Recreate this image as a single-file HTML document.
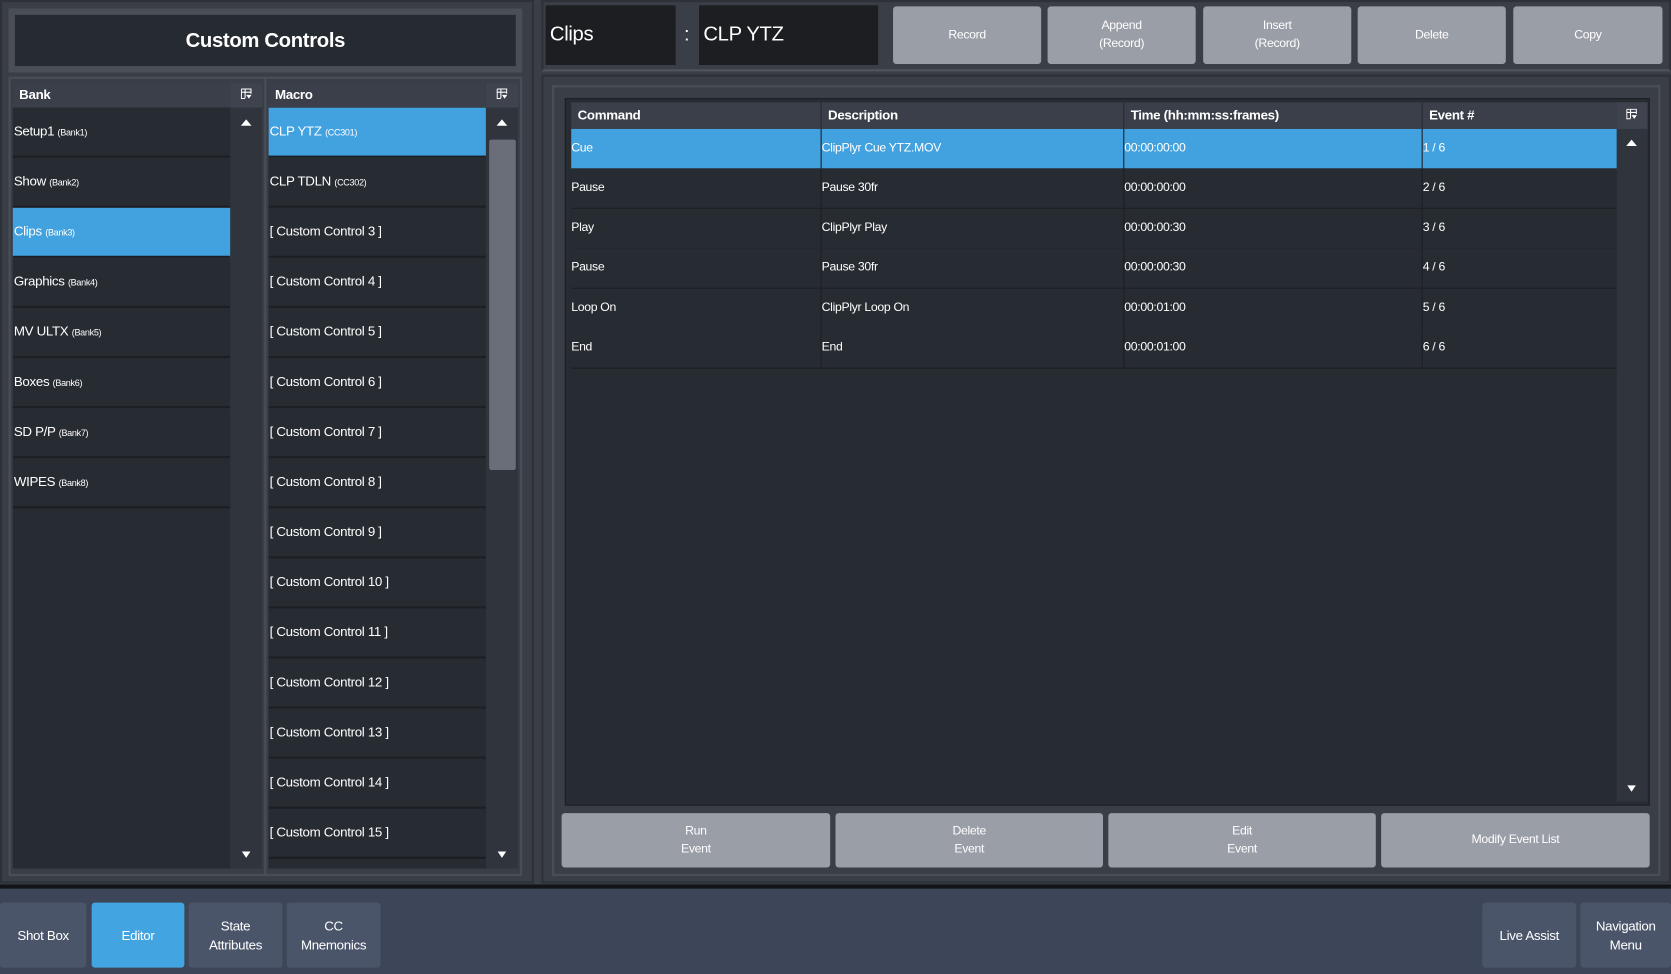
<!DOCTYPE html>
<html><head><meta charset="utf-8"><style>
html,body{margin:0;padding:0;background:#3a3e46;overflow:hidden;width:1671px;height:974px}
#w{position:absolute;left:0;top:0;width:1568px;height:914px;transform:scale(1.06569,1.06565);transform-origin:0 0;background:#3a3e46;font-family:"Liberation Sans",sans-serif;color:#fff;letter-spacing:-0.3px}
.a{position:absolute;box-sizing:border-box}
.fr{border:2px solid #4a4e56}
.row{position:absolute;left:0;right:0;height:47px;background:#272b32;border-bottom:2px solid #1c1f24;box-sizing:border-box;font-size:12.5px;line-height:45px;padding-left:1px;white-space:nowrap}
.row small{font-size:8.5px}
.sel{background:#42a1df}
.hdr{background:#3a3f4a;font-weight:bold;font-size:12.5px;line-height:23px;padding-left:6px}
.sc{background:#30343c}
.ic{position:absolute;width:10px;height:10px}
.up{width:0;height:0;border-left:5px solid transparent;border-right:5px solid transparent;border-bottom:6px solid #fff;position:absolute}
.dn{width:0;height:0;border-left:4px solid transparent;border-right:4px solid transparent;border-top:6px solid #fff;position:absolute}
.btn{position:absolute;background:#9a9ea7;border-radius:3px;color:#fff;font-size:11.5px;text-align:center;display:flex;align-items:center;justify-content:center;line-height:17px}
.tr{position:absolute;left:536px;width:981px;height:38px;border-bottom:1px solid #1c1f24;box-sizing:border-box;font-size:11.5px;line-height:37px;background:#272b32}
.tr span{position:absolute;top:0;height:37px;border-right:1px solid #1c1f24;box-sizing:border-box}
.bb{position:absolute;top:847px;height:61px;background:#4b556a;border-radius:3px;font-size:12.5px;text-align:center;display:flex;align-items:center;justify-content:center;line-height:18px}
</style></head><body><div id="w">
<svg width="0" height="0" style="position:absolute"><defs><g id="tic"><path d="M0.5 0.5H9.5V5M0.5 0.5V9.5H4M0.5 3.5H9.5M4 0.5V9" stroke="#fff" fill="none" stroke-width="1"/><path d="M5 6H10L7.5 9.5Z" fill="#fff"/></g></defs></svg>
<div class="a" style="left:0;top:0;width:501px;height:829px;border:2px solid #2e3138;background:#3a3e46"></div>
<div class="a fr" style="left:8px;top:8px;width:482px;height:60px;background:#4a4e56;padding:4px"><div style="background:#262a31;height:100%;text-align:center;font-weight:bold;font-size:19px;line-height:50px">Custom Controls</div></div>
<div class="a fr" style="left:8px;top:72px;width:482px;height:750px;background:#3a3e46"></div>
<div class="a" style="left:12px;top:78px;width:204px;height:737px;background:#272b32"></div>
<div class="a hdr" style="left:12px;top:78px;width:204px;height:23px">Bank</div>
<div class="a sc" style="left:216px;top:78px;width:30px;height:737px"></div>
<div class="a" style="left:216px;top:78px;width:30px;height:23px;background:#3e434e"></div>
<svg class="ic" style="left:226px;top:83px" viewBox="0 0 10 10"><use href="#tic"/></svg>
<div class="up" style="left:226px;top:112px"></div><div class="dn" style="left:227px;top:799px"></div>
<div class="a" style="left:12px;top:101px;width:204px;height:400px">
<div class="row" style="top:0">Setup1 <small>(Bank1)</small></div>
<div class="row" style="top:47px">Show <small>(Bank2)</small></div>
<div class="row sel" style="top:94px">Clips <small>(Bank3)</small></div>
<div class="row" style="top:141px">Graphics <small>(Bank4)</small></div>
<div class="row" style="top:188px">MV ULTX <small>(Bank5)</small></div>
<div class="row" style="top:235px">Boxes <small>(Bank6)</small></div>
<div class="row" style="top:282px">SD P/P <small>(Bank7)</small></div>
<div class="row" style="top:329px">WIPES <small>(Bank8)</small></div>
</div>
<div class="a" style="left:248px;top:72px;width:2px;height:750px;background:#4a4e56"></div>
<div class="a" style="left:252px;top:78px;width:204px;height:737px;background:#272b32;overflow:hidden">
<div class="row sel" style="top:23px">CLP YTZ <small>(CC301)</small></div>
<div class="row" style="top:70px">CLP TDLN <small>(CC302)</small></div>
<div class="row" style="top:117px">[ Custom Control 3 ]</div>
<div class="row" style="top:164px">[ Custom Control 4 ]</div>
<div class="row" style="top:211px">[ Custom Control 5 ]</div>
<div class="row" style="top:258px">[ Custom Control 6 ]</div>
<div class="row" style="top:305px">[ Custom Control 7 ]</div>
<div class="row" style="top:352px">[ Custom Control 8 ]</div>
<div class="row" style="top:399px">[ Custom Control 9 ]</div>
<div class="row" style="top:446px">[ Custom Control 10 ]</div>
<div class="row" style="top:493px">[ Custom Control 11 ]</div>
<div class="row" style="top:540px">[ Custom Control 12 ]</div>
<div class="row" style="top:587px">[ Custom Control 13 ]</div>
<div class="row" style="top:634px">[ Custom Control 14 ]</div>
<div class="row" style="top:681px">[ Custom Control 15 ]</div>
</div>
<div class="a hdr" style="left:252px;top:78px;width:204px;height:23px">Macro</div>
<div class="a sc" style="left:456px;top:78px;width:30px;height:737px"></div>
<div class="a" style="left:456px;top:78px;width:30px;height:23px;background:#3e434e"></div>
<svg class="ic" style="left:466px;top:83px" viewBox="0 0 10 10"><use href="#tic"/></svg>
<div class="up" style="left:466px;top:112px"></div><div class="dn" style="left:467px;top:799px"></div>
<div class="a" style="left:459px;top:131px;width:25px;height:310px;background:#6a6e78;border-radius:2px"></div>
<div class="a" style="left:508px;top:0;width:1060px;height:67px;border:2px solid #2e3138;border-bottom:2px solid #50545c"></div>
<div class="a" style="left:512px;top:5px;width:122px;height:56px;background:#1c1e22;font-size:19px;line-height:56px;padding-left:4px">Clips</div>
<div class="a" style="left:642px;top:22px;font-size:18px">:</div>
<div class="a" style="left:656px;top:5px;width:168px;height:56px;background:#1c1e22;font-size:19px;line-height:56px;padding-left:4px">CLP YTZ</div>
<div class="btn" style="left:838px;top:6px;width:139px;height:54px">Record</div>
<div class="btn" style="left:983px;top:6px;width:139px;height:54px">Append<br>(Record)</div>
<div class="btn" style="left:1129px;top:6px;width:139px;height:54px">Insert<br>(Record)</div>
<div class="btn" style="left:1274px;top:6px;width:139px;height:54px">Delete</div>
<div class="btn" style="left:1420px;top:6px;width:140px;height:54px">Copy</div>
<div class="a" style="left:508px;top:70px;width:1060px;height:759px;border:2px solid #2e3138;background:#3a3e46"></div>
<div class="a fr" style="left:518px;top:80px;width:1040px;height:742px"></div>
<div class="a" style="left:530px;top:92px;width:1018px;height:664px;background:#272b32;border:1px solid #1c1f24"></div>
<div class="a" style="left:536px;top:96px;width:981px;height:25px;background:#3a3f4a;font-size:12.5px;font-weight:bold;line-height:25px">
<span style="position:absolute;left:6px">Command</span><span style="position:absolute;left:241px">Description</span><span style="position:absolute;left:525px">Time (hh:mm:ss:frames)</span><span style="position:absolute;left:805px">Event #</span>
<i style="position:absolute;left:234px;top:0;width:1px;height:25px;background:#262a31"></i><i style="position:absolute;left:518px;top:0;width:1px;height:25px;background:#262a31"></i><i style="position:absolute;left:798px;top:0;width:1px;height:25px;background:#262a31"></i></div>
<div class="a sc" style="left:1517px;top:96px;width:29px;height:656px"></div>
<div class="a" style="left:1517px;top:96px;width:29px;height:25px;background:#3e434e"></div>
<svg class="ic" style="left:1526px;top:102px" viewBox="0 0 10 10"><use href="#tic"/></svg>
<div class="up" style="left:1526px;top:131px"></div><div class="dn" style="left:1527px;top:737px"></div>
<div class="tr sel" style="top:121px;background:#42a1df"><span style="left:0;width:235px">Cue</span><span style="left:235px;width:284px">ClipPlyr Cue YTZ.MOV</span><span style="left:519px;width:280px">00:00:00:00</span><span style="left:799px;border:0">1 / 6</span></div>
<div class="tr" style="top:158px"><span style="left:0;width:235px">Pause</span><span style="left:235px;width:284px">Pause 30fr</span><span style="left:519px;width:280px">00:00:00:00</span><span style="left:799px;border:0">2 / 6</span></div>
<div class="tr" style="top:196px"><span style="left:0;width:235px">Play</span><span style="left:235px;width:284px">ClipPlyr Play</span><span style="left:519px;width:280px">00:00:00:30</span><span style="left:799px;border:0">3 / 6</span></div>
<div class="tr" style="top:233px"><span style="left:0;width:235px">Pause</span><span style="left:235px;width:284px">Pause 30fr</span><span style="left:519px;width:280px">00:00:00:30</span><span style="left:799px;border:0">4 / 6</span></div>
<div class="tr" style="top:271px"><span style="left:0;width:235px">Loop On</span><span style="left:235px;width:284px">ClipPlyr Loop On</span><span style="left:519px;width:280px">00:00:01:00</span><span style="left:799px;border:0">5 / 6</span></div>
<div class="tr" style="top:308px"><span style="left:0;width:235px">End</span><span style="left:235px;width:284px">End</span><span style="left:519px;width:280px">00:00:01:00</span><span style="left:799px;border:0">6 / 6</span></div>
<div class="btn" style="left:527px;top:763px;width:252px;height:51px">Run<br>Event</div>
<div class="btn" style="left:784px;top:763px;width:251px;height:51px">Delete<br>Event</div>
<div class="btn" style="left:1040px;top:763px;width:251px;height:51px">Edit<br>Event</div>
<div class="btn" style="left:1296px;top:763px;width:252px;height:51px">Modify Event List</div>
<div class="a" style="left:0;top:830px;width:1568px;height:4px;background:#121418"></div>
<div class="a" style="left:0;top:834px;width:1568px;height:80px;background:#3d4658"></div>
<div class="bb" style="left:0;width:81px">Shot Box</div>
<div class="bb" style="left:86px;width:87px;background:#42a5e2">Editor</div>
<div class="bb" style="left:177px;width:88px">State<br>Attributes</div>
<div class="bb" style="left:269px;width:88px">CC<br>Mnemonics</div>
<div class="bb" style="left:1391px;width:88px">Live Assist</div>
<div class="bb" style="left:1483px;width:85px">Navigation<br>Menu</div>
</div></body></html>
